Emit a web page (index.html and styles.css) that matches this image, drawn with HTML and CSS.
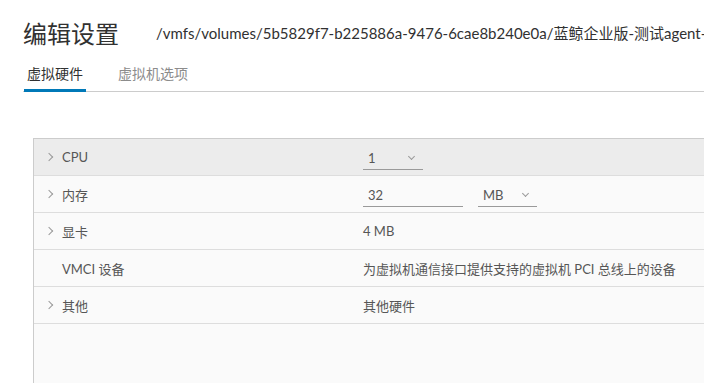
FILE: index.html
```html
<!DOCTYPE html>
<html lang="zh-CN">
<head>
    <meta charset="UTF-8">
    <meta name="viewport" content="width=device-width, initial-scale=1.0">
    <title>编辑设置</title>
    <link rel="stylesheet" href="styles.css">
</head>
<body>
    <div class="page">
        <div class="header">
            <h1>编辑设置</h1>
            <span class="divider"></span>
            <span class="path">/vmfs/volumes/5b5829f7-b225886a-9476-6cae8b240e0a/蓝鲸企业版-测试agent-linux/蓝鲸企业版-测试agent-linux.vmx</span>
        </div>

        <div class="tabs">
            <span class="tab active">虚拟硬件</span>
            <span class="tab">虚拟机选项</span>
        </div>

        <div class="hw-table">
            <div class="row hover">
                <div class="label"><span class="caret"></span>CPU</div>
                <div class="value">
                    <span class="select" style="width: 60px">1<span class="down"></span></span>
                </div>
            </div>
            <div class="row">
                <div class="label"><span class="caret"></span>内存</div>
                <div class="value">
                    <span class="input" style="width: 100px">32</span>
                    <span class="select" style="width: 59px">MB<span class="down"></span></span>
                </div>
            </div>
            <div class="row">
                <div class="label"><span class="caret"></span>显卡</div>
                <div class="value">4 MB</div>
            </div>
            <div class="row">
                <div class="label"><span class="caret none"></span>VMCI 设备</div>
                <div class="value">为虚拟机通信接口提供支持的虚拟机 PCI 总线上的设备</div>
            </div>
            <div class="row">
                <div class="label"><span class="caret"></span>其他</div>
                <div class="value">其他硬件</div>
            </div>
            <div class="filler"></div>
        </div>
    </div>
</body>
</html>
```

FILE: styles.css
```css
:root {
    --text-dark: #313131;
    --text: #565656;
    --muted: #8c8c8c;
    --blue: #0079b8;
    --line: #cccccc;
    --row-line: #dddddd;
    --row-bg: #fafafa;
    --hover-bg: #ececec;
}

html, body {
    margin: 0;
    height: 100%;
    overflow: hidden;
    background: #ffffff;
}

body {
    font-family: Lato, "Noto Sans CJK SC", sans-serif;
    color: var(--text);
}

.page {
    padding: 14px 0 0 23px;
}

.header {
    display: flex;
    align-items: center;
    height: 36px;
    white-space: nowrap;
}

h1 {
    margin: 0;
    font-size: 24px;
    font-weight: 400;
    color: var(--text-dark);
}

.divider {
    width: 1px;
    height: 21px;
    background: var(--line);
    margin: 0 19px 0 18px;
}

.path {
    font-size: 15px;
    color: var(--text-dark);
}

.tabs {
    display: flex;
    gap: 29px;
    margin-top: 13px;
    border-bottom: 1px solid var(--line);
    padding-left: 1px;
}

.tab {
    font-size: 14px;
    color: var(--muted);
    padding: 0 3px 8px;
    margin-bottom: -1px;
}

.tab.active {
    color: var(--text-dark);
    border-bottom: 3px solid var(--blue);
    padding-bottom: 6px;
}

.hw-table {
    margin: 46px 0 0 10px;
    width: 900px;
    border: 1px solid var(--line);
    border-bottom: none;
    background: var(--row-bg);
    font-size: 13px;
}

.row {
    display: flex;
    align-items: center;
    height: 36px;
    border-bottom: 1px solid var(--row-line);
}

.row.hover {
    background: var(--hover-bg);
}

.label {
    width: 329px;
    display: flex;
    align-items: center;
    color: var(--text);
}

.caret {
    width: 5px;
    height: 5px;
    border-right: 1px solid #9a9a9a;
    border-top: 1px solid #9a9a9a;
    transform: rotate(45deg);
    margin: 0 10px 0 12px;
}

.caret.none {
    visibility: hidden;
}

.value {
    display: flex;
    align-items: center;
    gap: 15px;
    color: var(--text);
}

.select, .input {
    display: flex;
    align-items: center;
    justify-content: space-between;
    box-sizing: border-box;
    height: 24px;
    padding: 0 5px;
    border-bottom: 1px solid #9a9a9a;
    margin-top: 2px;
}

.down {
    width: 4px;
    height: 4px;
    border-right: 1px solid #9a9a9a;
    border-bottom: 1px solid #9a9a9a;
    transform: rotate(45deg);
    margin: 0 4px 3px 0;
}

.filler {
    height: 60px;
}
```
